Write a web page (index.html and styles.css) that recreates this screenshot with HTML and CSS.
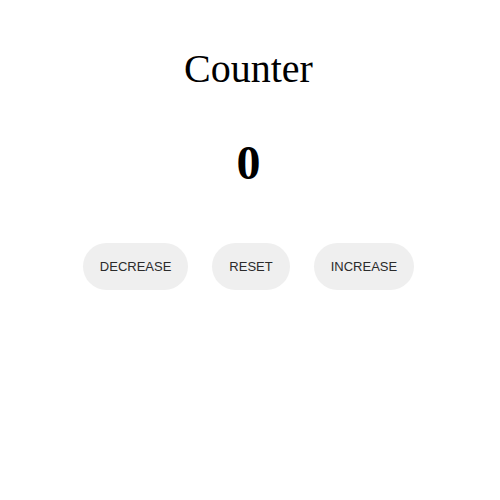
FILE: index.html
```html
<!DOCTYPE html>
<html>
<head>
<meta charset="utf-8">
<link rel="stylesheet" href="styles.css">
</head>
<body>
<div class="app">
  <h1 class="title">Counter</h1>
  <div class="count">0</div>
  <div class="buttons">
    <button class="btn">DECREASE</button>
    <button class="btn">RESET</button>
    <button class="btn">INCREASE</button>
  </div>
</div>
</body>
</html>
```
FILE: styles.css
```css
body {
  margin: 0;
  background: #fff;
  font-family: "Liberation Serif", "Times New Roman", serif;
}
.app {
  display: flex;
  flex-direction: column;
  align-items: center;
  padding-top: 46px;
  padding-right: 3px;
}
.title {
  margin: 0;
  font-size: 40px;
  font-weight: normal;
  line-height: 46px;
}
.count {
  margin-top: 41px;
  font-size: 48px;
  font-weight: bold;
  line-height: 60px;
}
.buttons {
  display: flex;
  gap: 24px;
  margin-top: 50px;
}
.btn {
  font-family: "Liberation Sans", Arial, sans-serif;
  font-size: 13px;
  line-height: 15px;
  color: #2b2b2b;
  background: #efefef;
  border: none;
  border-radius: 24px;
  padding: 16px 17px;
}
```
